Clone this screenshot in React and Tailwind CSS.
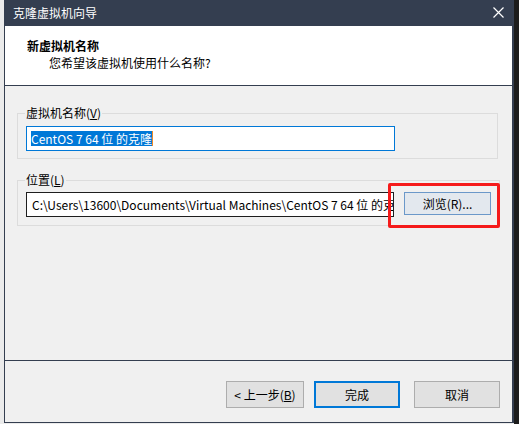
import React from "react";

const font = { fontFamily: '"Noto Sans CJK SC", "Noto Sans", sans-serif' };

const WinButton = ({ children, primary, className = "" }) => (
  <button
    className={
      "h-[27px] bg-[#e1e1e1] text-[12px] leading-[16px] text-black " +
      (primary ? "border-2 border-[#0078d7] " : "border border-[#adadad] ") +
      className
    }
  >
    {children}
  </button>
);

const App = () => {
  return (
    <div
      className="relative w-[519px] h-[424px] flex bg-[#ebebeb] overflow-hidden text-[12px] text-black"
      style={font}
    >
      <div className="w-[4px] shrink-0" />

      {/* dialog window */}
      <div className="w-[510px] h-[423px] shrink-0 flex flex-col border-l border-r-2 border-b border-[#343e50] bg-[#f0f0f0]">
        {/* title bar */}
        <div className="h-[26px] shrink-0 flex items-center justify-between bg-[#343e50] pl-[8px] pr-[8px]">
          <span className="text-white text-[12px] leading-[26px]">克隆虚拟机向导</span>
          <svg width="11" height="11" viewBox="0 0 11 11" className="mb-[1px]">
            <path d="M0.5 0.5 L10.5 10.5 M10.5 0.5 L0.5 10.5" stroke="#ffffff" strokeWidth="1.2" fill="none" />
          </svg>
        </div>

        {/* header */}
        <div className="h-[60px] shrink-0 bg-white border-b border-[#343e50] pl-[22px] pt-[12px]">
          <div className="font-bold leading-[16px]">新虚拟机名称</div>
          <div className="leading-[16px] mt-[1px] pl-[22px]">您希望该虚拟机使用什么名称?</div>
        </div>

        {/* body */}
        <div className="flex-1 pl-[12px] pt-[19px] border-b border-[#343e50]">
          <fieldset className="w-[481px] border border-[#dcdcdc] px-[8px] pb-[7px]">
            <legend className="leading-[16px] -ml-[1px] px-[1px]">
              虚拟机名称(<span className="underline">V</span>)
            </legend>
            <div className="mt-[5px] w-[369px] h-[25px] border border-[#0078d7] bg-white pl-[4px] flex items-center">
              <span className="bg-[#0078d7] text-white leading-[15px] whitespace-nowrap">CentOS 7 64 位 的克隆</span>
              <span className="w-[1px] h-[15px] bg-[#f08a24]" />
            </div>
          </fieldset>

          <fieldset className="mt-[13px] w-[481px] border border-[#dcdcdc] px-[8px] pb-[8px]">
            <legend className="leading-[16px] -ml-[1px] px-[1px]">
              位置(<span className="underline">L</span>)
            </legend>
            <div className="mt-[4px] flex items-start gap-[10px]">
              <div className="w-[368px] h-[25px] border border-[#1e1e1e] bg-white pl-[5px] flex items-center overflow-hidden whitespace-nowrap">
                C:\Users\13600\Documents\Virtual Machines\CentOS 7 64 位 的克隆
              </div>
              <button className="w-[87px] h-[23px] bg-[#e3e8ee] border border-[#6b98c9] leading-[16px]">
                浏览(R)...
              </button>
            </div>
          </fieldset>
        </div>

        {/* footer */}
        <div className="h-[61px] shrink-0 flex justify-end items-start pt-[20px] pr-[12px]">
          <WinButton className="w-[78px]">
            &lt; 上一步(<span className="underline">B</span>)
          </WinButton>
          <WinButton primary className="w-[86px] ml-[10px]">
            完成
          </WinButton>
          <WinButton className="w-[86px] ml-[14px]">取消</WinButton>
        </div>
      </div>

      <div className="w-[5px] shrink-0 bg-[#1c1c1c]" />

      {/* red annotation around browse button */}
      <div className="absolute left-[388px] top-[183px] w-[112px] h-[45px] border-[3px] border-[#f51a1a] rounded-[2px] pointer-events-none" />
    </div>
  );
};

export default App;
